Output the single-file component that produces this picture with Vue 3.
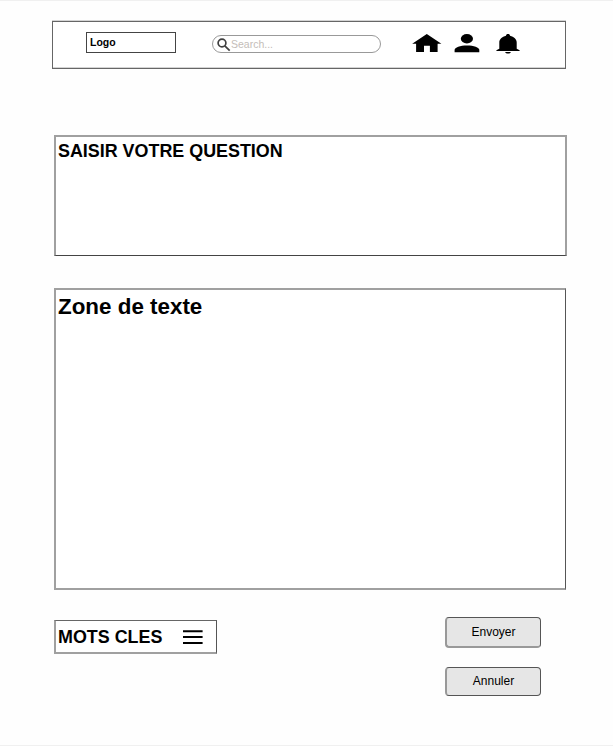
<script setup>
const actions = ['Envoyer', 'Annuler']
</script>

<template>
  <main class="page">
    <header class="header">
      <div class="logo">Logo</div>
      <label class="search">
        <svg class="glass" viewBox="0 0 14 14">
          <circle cx="5" cy="5" r="3.9" />
          <path d="M7.8 7.8L12.7 12.7" />
        </svg>
        <input type="text" placeholder="Search..." />
      </label>
      <nav class="icons">
        <svg class="home" viewBox="0 0 30 18">
          <path d="M14.8 0L29.4 9.8H25.6V18.2H17.9V11.7H12V18.2H4.1V9.8H.2Z" />
        </svg>
        <svg class="user" viewBox="0 0 26 19">
          <ellipse cx="12.9" cy="4.8" rx="6.1" ry="4.7" />
          <path d="M.6 18.2V15.9C.6 13.2 6.2 11.4 13 11.4S25.3 13.2 25.3 15.9V18.2Z" />
        </svg>
        <svg class="bell" viewBox="0 0 24 20">
          <path d="M12 0C13.2 0 14 .7 14 1.7C18 2.5 20.7 5.2 20.7 8.5V14.7L23.6 16.3V17H.4V16.3L3.3 14.7V8.5C3.3 5.2 6 2.5 10 1.7C10 .7 10.8 0 12 0Z" />
          <path d="M9.1 18H14.9C14.5 19 13.4 19.6 12 19.6S9.5 19 9.1 18Z" />
        </svg>
      </nav>
    </header>

    <section class="question">
      <h2>SAISIR VOTRE QUESTION</h2>
    </section>

    <section class="zone">
      <h1>Zone de texte</h1>
    </section>

    <footer class="footer">
      <div class="keywords">
        <h2>MOTS CLES</h2>
        <svg class="menu" viewBox="0 0 20 14">
          <path d="M0 1.3H19.6M0 7.1H19.6M0 13H19.6" />
        </svg>
      </div>
      <div class="actions">
        <button v-for="label in actions" :key="label" type="button">{{ label }}</button>
      </div>
    </footer>
  </main>
</template>

<style>
body {
  margin: 0;
  background: #fff;
}
</style>

<style scoped>
.page {
  box-sizing: border-box;
  width: 613px;
  height: 746px;
  padding: 20px 46px 0 52px;
  border-top: 1px solid #f0f0f0;
  border-bottom: 1px solid #f0f0f0;
  background: #fefefe;
  color: #000;
  font-family: "Liberation Sans", Arial, sans-serif;
  overflow: hidden;
}
.header,
.question,
.zone,
.keywords {
  box-sizing: border-box;
  border: 2px solid #a0a0a0;
  background: #fff;
}
h1,
h2 {
  margin: 0;
  font-weight: bold;
  white-space: nowrap;
}
h1 {
  font-size: 22.4px;
  line-height: 26px;
}
h2 {
  font-size: 17.9px;
  line-height: 20px;
}
.header {
  display: flex;
  align-items: flex-start;
  width: 514px;
  height: 48px;
  padding: 10px 0 0 33px;
  border: 1px solid #666;
  box-shadow: 0 -1px #d4d4d4, inset 0 -1px #d4d4d4;
}
.logo {
  box-sizing: border-box;
  width: 90px;
  height: 21px;
  padding-left: 3px;
  border: 1px solid #444;
  font-size: 10.5px;
  font-weight: bold;
  line-height: 19px;
}
.search {
  box-sizing: border-box;
  display: flex;
  width: 169px;
  height: 18px;
  margin: 3px 0 0 36px;
  padding-left: 4px;
  border: 1px solid #999;
  border-radius: 9px;
}
.glass {
  flex: none;
  width: 14px;
  height: 14px;
  margin-top: 2px;
  fill: none;
  stroke: #404040;
  stroke-width: 1.7;
}
.search input {
  width: 130px;
  height: 16px;
  padding: 0;
  border: 0;
  background: none;
  font: 10.5px/15px "Liberation Sans", Arial, sans-serif;
  outline: 0;
}
.search input::placeholder {
  color: #c4bdb8;
  opacity: 1;
}
.icons {
  display: flex;
  margin: 2px 0 0 31px;
}
.home {
  width: 30px;
  height: 18px;
}
.user {
  width: 26px;
  height: 19px;
  margin-left: 12px;
}
.bell {
  width: 24px;
  height: 20px;
  margin-left: 16px;
}
.question {
  width: 513px;
  height: 121px;
  margin: 66px 0 0 2px;
  padding: 4px 0 0 2px;
  border-bottom: 1px solid #444;
}
.zone {
  width: 512px;
  height: 302px;
  margin: 32px 0 0 2px;
  padding: 4px 0 0 2px;
  border-right: 1px solid #555;
}
.footer {
  display: flex;
  justify-content: space-between;
  align-items: flex-start;
  margin: 27px 26px 0 2px;
}
.keywords {
  display: flex;
  width: 163px;
  height: 34px;
  margin-top: 3px;
  padding: 6px 0 0 2px;
  border-top: 1px solid #666;
  border-right: 1px solid #555;
}
.menu {
  flex: none;
  width: 20px;
  height: 14px;
  margin: 3px 0 0 21px;
  fill: none;
  stroke: #000;
  stroke-width: 2;
}
.actions {
  display: flex;
  flex-direction: column;
  gap: 19px;
}
.actions button {
  width: 96px;
  height: 31px;
  padding: 0 0 1px;
  border: 1px solid #555;
  border-left: 2px solid #999;
  border-bottom: 2px solid #999;
  border-radius: 4px;
  background: #e6e6e6;
  color: #000;
  font: 12px/26px "Liberation Sans", Arial, sans-serif;
}
.actions button:last-child {
  height: 29px;
  border-bottom: 1px solid #555;
}
</style>
